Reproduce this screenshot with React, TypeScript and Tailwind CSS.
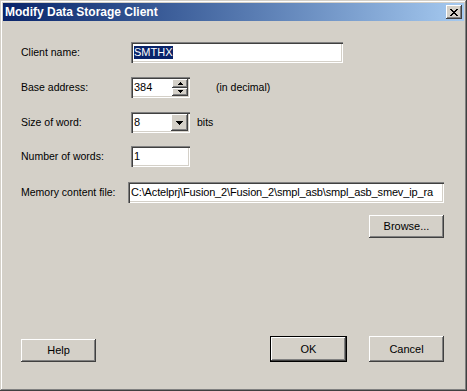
import React from 'react';

const sunken =
  'bg-white shadow-[inset_1px_1px_0_#808080,inset_2px_2px_0_#404040,inset_-1px_-1px_0_#ffffff,inset_-2px_-2px_0_#d4d0c8]';
const raised =
  'bg-[#d4d0c8] shadow-[inset_-1px_-1px_0_#404040,inset_1px_1px_0_#ffffff,inset_-2px_-2px_0_#808080,inset_2px_2px_0_#d4d0c8]';

function Arrow({ dir, w = 7, h = 4 }: { dir: 'up' | 'down'; w?: number; h?: number }) {
  const pts = dir === 'up' ? `0,${h} ${w / 2},0 ${w},${h}` : `0,0 ${w},0 ${w / 2},${h}`;
  return (
    <svg width={w} height={h} viewBox={`0 0 ${w} ${h}`} shapeRendering="crispEdges">
      <polygon points={pts} fill="#000" />
    </svg>
  );
}

function Label({ children, w = 'w-[110px]' }: { children: React.ReactNode; w?: string }) {
  return <div className={`${w} shrink-0 text-[10.5px] text-black`}>{children}</div>;
}

function Btn({ children, className = '' }: { children: React.ReactNode; className?: string }) {
  return (
    <div className={`${raised} flex w-[75px] items-center justify-center text-[11px] text-black ${className}`}>
      {children}
    </div>
  );
}

export default function App() {
  return (
    <div className="flex h-[391px] w-[467px] flex-col bg-[#d4d0c8] p-[3px] font-['Liberation_Sans',Arial,sans-serif] shadow-[inset_-1px_-1px_0_#404040,inset_1px_1px_0_#d4d0c8,inset_-2px_-2px_0_#808080,inset_2px_2px_0_#ffffff]">
      {/* title bar */}
      <div className="flex h-[18px] shrink-0 items-center justify-between bg-gradient-to-r from-[#0a246a] to-[#a6caf0] pl-[2px] pr-[2px]">
        <span className="text-[12px] font-bold leading-none text-white">Modify Data Storage Client</span>
        <div className={`${raised} flex h-[14px] w-[16px] items-center justify-center`}>
          <svg width="8" height="7" viewBox="0 0 8 7" shapeRendering="crispEdges">
            <path d="M0 0h2v1H0zM6 0h2v1H6zM1 1h2v1H1zM5 1h2v1H5zM2 2h4v1H2zM3 3h2v1H3zM2 4h4v1H2zM1 5h2v1H1zM5 5h2v1H5zM0 6h2v1H0zM6 6h2v1H6z" fill="#000" />
          </svg>
        </div>
      </div>

      <div className="flex flex-1 flex-col pb-[26px] pl-[18px] pr-[20px] pt-[21px]">
        {/* client name */}
        <div className="flex h-[21px] items-center">
          <Label>Client name:</Label>
          <div className={`${sunken} flex h-[21px] w-[212px] items-center pl-[3px]`}>
            <span className="bg-[#0a246a] text-[11px] leading-[13px] text-white">SMTHX</span>
          </div>
        </div>

        {/* base address */}
        <div className="mt-[14px] flex h-[21px] items-center">
          <Label>Base address:</Label>
          <div className={`${sunken} flex h-[21px] w-[59px] items-stretch py-[2px] pr-[2px]`}>
            <div className="flex flex-1 items-center pl-[3px] text-[11px] text-black">384</div>
            <div className="flex w-[16px] flex-col">
              <div className={`${raised} flex flex-1 items-center justify-center`}>
                <Arrow dir="up" w={5} h={3} />
              </div>
              <div className={`${raised} flex flex-1 items-center justify-center`}>
                <Arrow dir="down" w={5} h={3} />
              </div>
            </div>
          </div>
          <span className="ml-[26px] text-[10.5px] text-black">(in decimal)</span>
        </div>

        {/* size of word */}
        <div className="mt-[14px] flex h-[21px] items-center">
          <Label>Size of word:</Label>
          <div className={`${sunken} flex h-[21px] w-[59px] items-stretch py-[2px] pr-[2px]`}>
            <div className="flex flex-1 items-center pl-[3px] text-[11px] text-black">8</div>
            <div className={`${raised} flex w-[17px] items-center justify-center`}>
              <Arrow dir="down" w={7} h={4} />
            </div>
          </div>
          <span className="ml-[7px] text-[10.5px] text-black">bits</span>
        </div>

        {/* number of words */}
        <div className="mt-[13px] flex h-[21px] items-center">
          <Label>Number of words:</Label>
          <div className={`${sunken} flex h-[21px] w-[59px] items-center pl-[3px] text-[11px] text-black`}>1</div>
        </div>

        {/* memory content file */}
        <div className="mt-[15px] flex h-[21px] items-center">
          <Label w="w-[107px]">Memory content file:</Label>
          <div className={`${sunken} flex h-[21px] min-w-0 flex-1 items-center overflow-hidden whitespace-nowrap pl-[3px] text-[11px] tracking-[-0.15px] text-black`}>
            C:\Actelprj\Fusion_2\Fusion_2\smpl_asb\smpl_asb_smev_ip_ra
          </div>
        </div>

        <div className="mt-[12px] flex justify-end">
          <Btn className="h-[23px]">Browse...</Btn>
        </div>

        <div className="mt-auto flex items-end">
          <Btn className="h-[23px]">Help</Btn>
          <div className="ml-auto border border-black">
            <Btn className="h-[24px] w-[73px]">OK</Btn>
          </div>
          <Btn className="ml-[22px] h-[26px]">Cancel</Btn>
        </div>
      </div>
    </div>
  );
}
